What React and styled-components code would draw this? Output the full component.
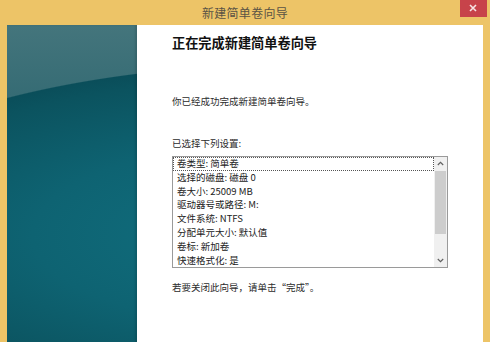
import React from "react";
import styled, { createGlobalStyle } from "styled-components";

const GlobalStyle = createGlobalStyle`
  html, body {
    margin: 0;
    padding: 0;
    background: #ffffff;
  }
  body {
    font-family: "Noto Sans CJK SC", "Noto Sans", sans-serif;
  }
`;

const Page = styled.div`
  width: 500px;
  height: 342px;
  overflow: hidden;
  background: #ffffff;
`;

const Window = styled.div`
  width: 490px;
  height: 360px;
  display: flex;
  flex-direction: column;
  background: #edc467;
`;

const TitleBar = styled.div`
  height: 25px;
  display: grid;
  grid-template-columns: 1fr auto 1fr;
  align-items: start;
`;

const Title = styled.div`
  grid-column: 2;
  line-height: 25px;
  font-size: 12px;
  color: #5a5345;
  letter-spacing: 0.3px;
`;

const CloseButton = styled.div`
  grid-column: 3;
  justify-self: end;
  margin-right: 3px;
  width: 27px;
  height: 17px;
  line-height: 0;
`;

const Body = styled.div`
  flex: 1;
  display: flex;
  margin: 0 7px;
`;

const SidePanel = styled.div`
  width: 130px;
  flex-shrink: 0;
  background:
    radial-gradient(
      ellipse 500px 172px at 300px 210px,
      #117181 0%,
      #0e6372 55%,
      #0b535f 92%,
      #0a4e5a 99.4%,
      rgba(10, 78, 90, 0) 100%
    ),
    linear-gradient(180deg, #44757c 0%, #336a73 25%, #1a7d8b 80%, #1a8692 100%);
  box-shadow: inset -2px 0 2px rgba(0, 0, 0, 0.12);
`;

const Content = styled.div`
  flex: 1;
  background: #ffffff;
  padding: 9px 0 0 35px;
  display: flex;
  flex-direction: column;
  color: #2b2b2b;
`;

const Heading = styled.div`
  font-size: 13.2px;
  line-height: 18px;
  font-weight: bold;
  color: #111111;
`;

const Para = styled.div`
  font-size: 9.5px;
  line-height: 14px;
  margin-top: ${(p) => p.$gap}px;
`;

const ListBox = styled.div`
  margin-top: 6px;
  width: 274px;
  height: 110px;
  border: 1px solid #9a9a9a;
  display: flex;
  overflow: hidden;
`;

const Rows = styled.div`
  flex: 1;
  display: flex;
  flex-direction: column;
`;

const Row = styled.div`
  height: 13.8px;
  flex-shrink: 0;
  font-size: 9.5px;
  line-height: 11.8px;
  padding-left: 3px;
  border: 1px dotted ${(p) => (p.$focused ? "#555" : "transparent")};
  box-sizing: border-box;
  color: #222;
  white-space: nowrap;
`;

const ScrollBar = styled.div`
  width: 13px;
  background: #f0f0f0;
  display: flex;
  flex-direction: column;
  align-items: stretch;
`;

const Arrow = styled.div`
  height: 13px;
  display: flex;
  align-items: center;
  justify-content: center;
`;

const Thumb = styled.div`
  height: 63px;
  margin: 1px 1px 0;
  background: #cdcdcd;
`;

const Track = styled.div`
  flex: 1;
`;

const Chevron = ({ up }) => (
  <svg width="7" height="5" viewBox="0 0 7 5">
    <path
      d={up ? "M0.8 4 L3.5 1.3 L6.2 4" : "M0.8 1 L3.5 3.7 L6.2 1"}
      fill="none"
      stroke="#606060"
      strokeWidth="1.2"
    />
  </svg>
);

const CloseIcon = () => (
  <svg width="27" height="17" viewBox="0 0 27 17">
    <rect x="0" y="0" width="27" height="17" fill="#c7434a" />
    <path
      d="M10 5 L16 11 M16 5 L10 11"
      stroke="#f7e4e4"
      strokeWidth="1.6"
      fill="none"
    />
  </svg>
);

const settings = [
  "卷类型: 简单卷",
  "选择的磁盘: 磁盘 0",
  "卷大小: 25009 MB",
  "驱动器号或路径: M:",
  "文件系统: NTFS",
  "分配单元大小: 默认值",
  "卷标: 新加卷",
  "快速格式化: 是",
];

export default function App() {
  return (
    <Page>
      <GlobalStyle />
      <Window>
        <TitleBar>
          <Title>新建简单卷向导</Title>
          <CloseButton>
            <CloseIcon />
          </CloseButton>
        </TitleBar>
        <Body>
          <SidePanel />
          <Content>
            <Heading>正在完成新建简单卷向导</Heading>
            <Para $gap={42}>你已经成功完成新建简单卷向导。</Para>
            <Para $gap={28}>已选择下列设置:</Para>
            <ListBox>
              <Rows>
                {settings.map((s, i) => (
                  <Row key={s} $focused={i === 0}>
                    {s}
                  </Row>
                ))}
              </Rows>
              <ScrollBar>
                <Arrow>
                  <Chevron up />
                </Arrow>
                <Thumb />
                <Track />
                <Arrow>
                  <Chevron />
                </Arrow>
              </ScrollBar>
            </ListBox>
            <Para $gap={12}>若要关闭此向导，请单击“完成”。</Para>
          </Content>
        </Body>
      </Window>
    </Page>
  );
}
